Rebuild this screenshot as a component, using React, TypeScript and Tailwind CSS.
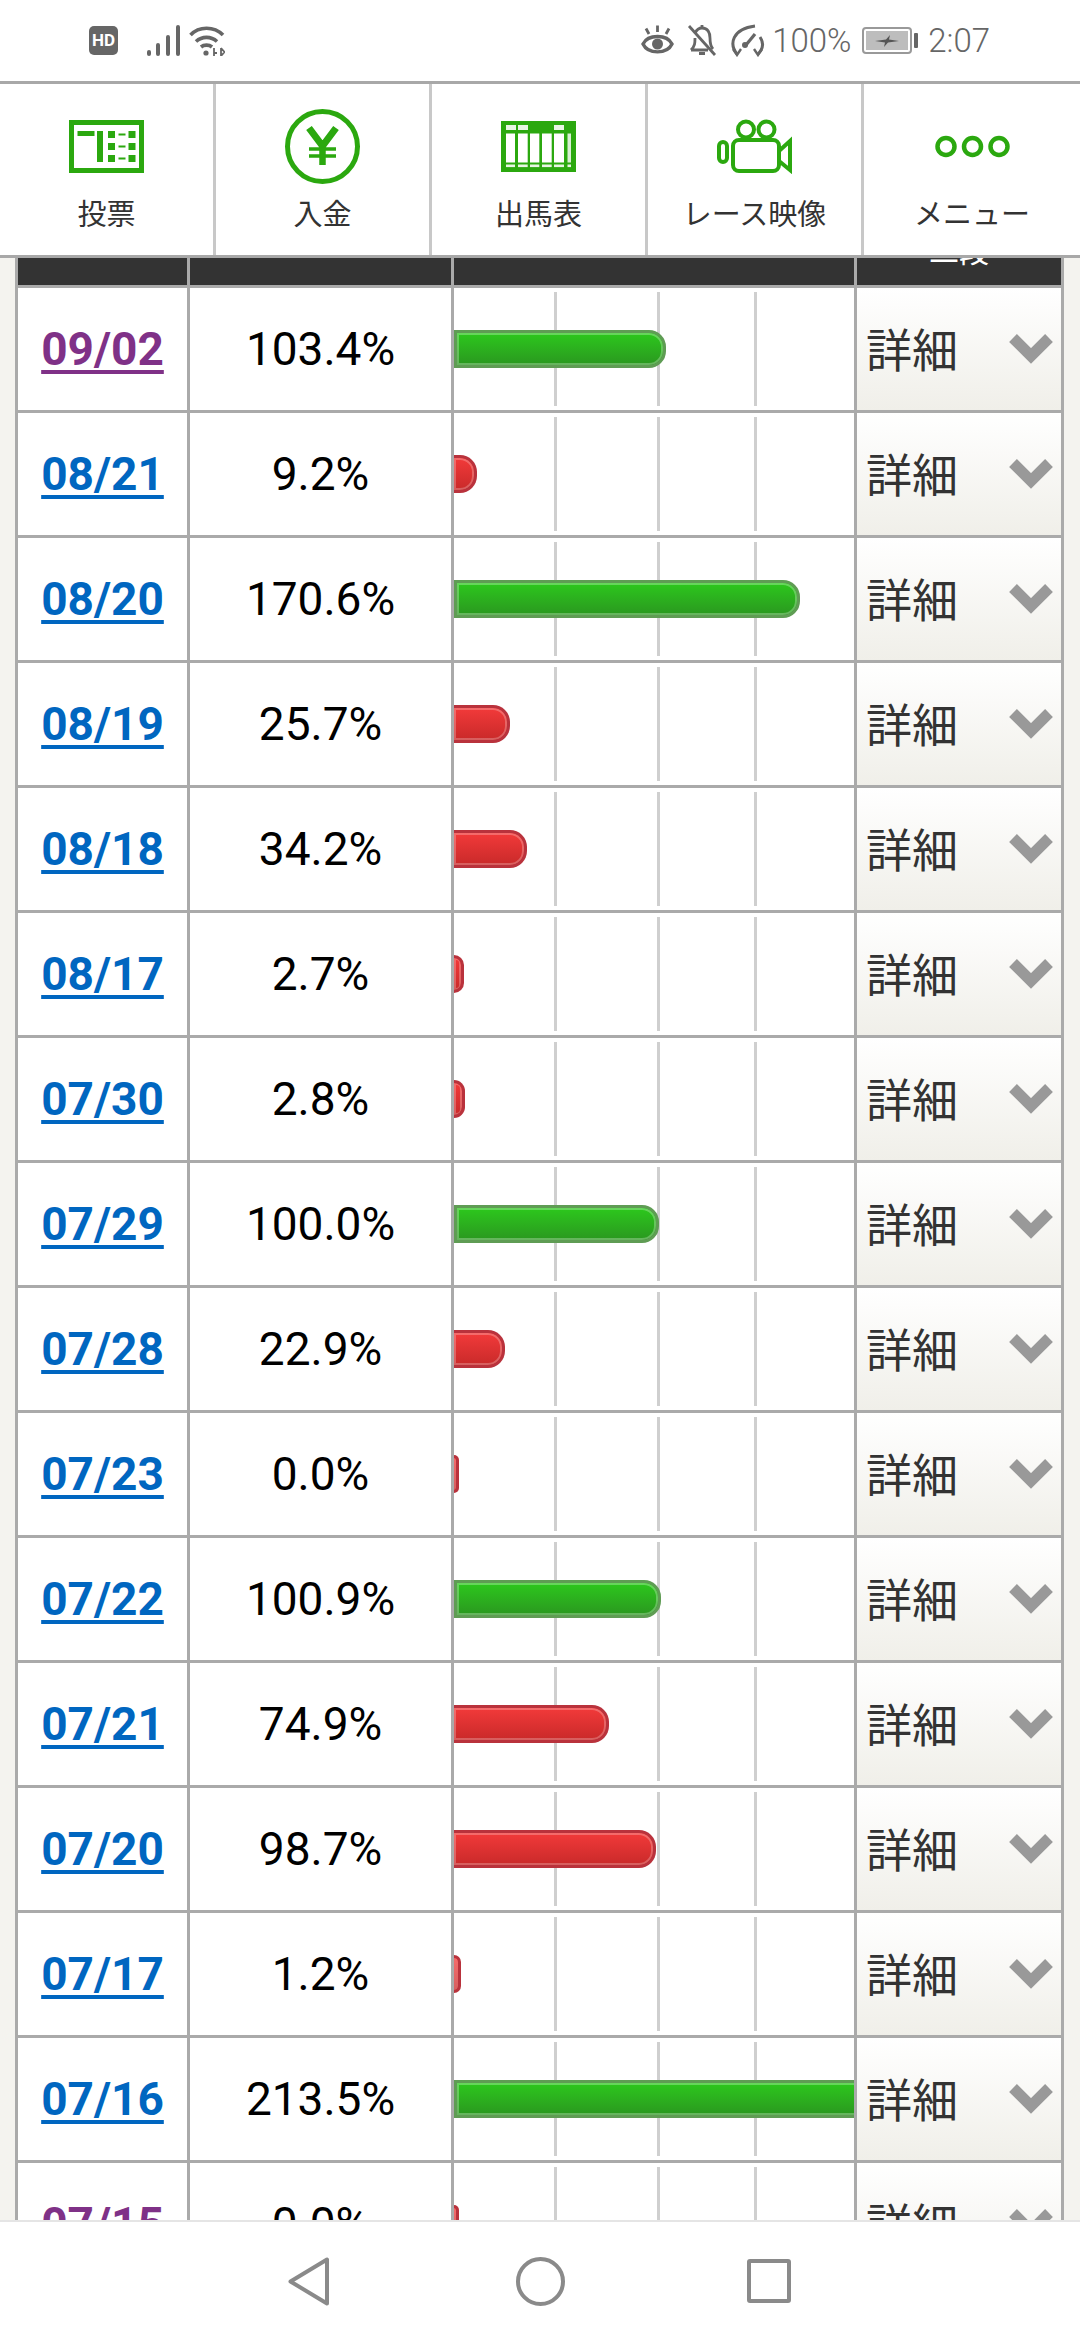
const rows = [
  { date: "09/02", pct: 103.4, visited: true },
  { date: "08/21", pct: 9.2 },
  { date: "08/20", pct: 170.6 },
  { date: "08/19", pct: 25.7 },
  { date: "08/18", pct: 34.2 },
  { date: "08/17", pct: 2.7 },
  { date: "07/30", pct: 2.8 },
  { date: "07/29", pct: 100.0 },
  { date: "07/28", pct: 22.9 },
  { date: "07/23", pct: 0.0 },
  { date: "07/22", pct: 100.9 },
  { date: "07/21", pct: 74.9, red: true },
  { date: "07/20", pct: 98.7, red: true },
  { date: "07/17", pct: 1.2 },
  { date: "07/16", pct: 213.5 },
  { date: "07/15", pct: 0.0, visited: true },
];

function StatusBar() {
  return (
    <div className="h-[81px] flex items-center justify-between pl-[89px] pr-[90px] bg-white text-[#666] font-['Roboto',sans-serif]">
      <div className="flex items-center">
        <div className="w-[29px] h-[29px] rounded-[5px] bg-[#666] flex items-center justify-center text-white text-[17px] font-bold leading-none">HD</div>
        <svg width="33" height="31" viewBox="0 0 33 31" className="ml-[29px]" fill="#666">
          <rect x="0" y="25" width="4" height="6" rx="2" />
          <rect x="9" y="18" width="4" height="13" rx="2" />
          <rect x="19" y="10" width="4" height="21" rx="2" />
          <rect x="29" y="0" width="4" height="31" rx="2" />
        </svg>
        <svg width="36" height="30" viewBox="0 0 36 30" className="ml-[9px]" fill="none" stroke="#666" strokeWidth="3.6">
          <path d="M1.5 9 C10 0 25 0 34 9" />
          <path d="M7 15.5 C13 10 22 10 28 15.5" />
          <path d="M12 21 C15 18.5 20 18.5 23 21" />
          <circle cx="17" cy="27" r="2.6" fill="#666" stroke="none" />
          <path d="M25 30 V22 M24.5 27 H28 M32 22 V30 M32 22 L35.5 26 L32 30" strokeWidth="1.8" />
        </svg>
      </div>
      <div className="flex items-center">
        <svg width="33" height="31" viewBox="0 0 33 31" fill="none" stroke="#666" strokeWidth="3.4">
          <path d="M2 19 C7 9 26 9 31 19 C26 29.5 7 29.5 2 19 Z" />
          <circle cx="16.5" cy="19" r="5.5" fill="#666" stroke="none" />
          <path d="M16.5 7 V0.5 M8 9 L5 3.5 M25 9 L28 3.5" strokeWidth="2.8" />
        </svg>
        <svg width="30" height="33" viewBox="0 0 30 33" className="ml-[13px]" fill="none" stroke="#666" strokeWidth="2.8">
          <path d="M4 26 H21 M4 26 C8 22 8 19 8 14 M8 9 C10 5 13 4 15 4 C21 4 23 9 23 14 C23 19 24 23 26 25" />
          <path d="M15 1 V4 M12 29.5 H18" />
          <path d="M2 2 L28 31" />
        </svg>
        <svg width="37" height="33" viewBox="0 0 37 33" className="ml-[12px]" fill="none" stroke="#666" strokeWidth="3">
          <path d="M8 30 C0 20 3 5 26 2" />
          <path d="M31 13 C35 19 34 25 29 30" />
          <path d="M4 25 L8 31 L12 25 M25 25 L29 31 L33 25" strokeWidth="2.4" />
          <path d="M17 21 L26 10" strokeWidth="3.2" />
          <circle cx="16" cy="21" r="3" fill="#666" stroke="none" />
        </svg>
        <span className="ml-[6px] text-[33px] font-light leading-none w-[80px]">100%</span>
        <div className="ml-[10px] w-[50px] h-[27px] border-[2px] border-[#999] rounded-[4px] p-[2px]">
          <div className="w-full h-full bg-[#bdbdbd] flex items-center justify-center">
            <svg width="24" height="12" viewBox="0 0 24 12" fill="#555">
              <path d="M0 6 L11 4.5 L15 0 L14 4.5 L24 6 L13 7.5 L9 12 L10 7.5 Z" />
            </svg>
          </div>
        </div>
        <div className="ml-[2px] w-[4px] h-[15px] bg-[#666] rounded-[1px]" />
        <span className="ml-[10px] text-[33px] font-light leading-none">2:07</span>
      </div>
    </div>
  );
}

const GREEN = "#2ba80f";

function VoteIcon() {
  return (
    <svg width="75" height="53" viewBox="0 0 75 53" fill={GREEN}>
      <rect x="2.5" y="2.5" width="70" height="48" fill="none" stroke={GREEN} strokeWidth="5" />
      <rect x="8.5" y="11" width="17" height="5" />
      <rect x="28" y="11" width="6" height="31" />
      {[11, 23, 35].map((y) => (
        <g key={y}>
          <rect x="39" y={y} width="7" height="7" />
          <rect x="49.5" y={y + 2.5} width="7" height="2" />
          <rect x="59.5" y={y} width="7" height="7" />
        </g>
      ))}
    </svg>
  );
}

function YenIcon() {
  return (
    <svg width="75" height="75" viewBox="0 0 75 75" fill="none" stroke={GREEN}>
      <circle cx="37.5" cy="37.5" r="35" strokeWidth="5" />
      <path d="M24 19 L37.5 37 L51 19" strokeWidth="7" />
      <path d="M37.5 36 V56" strokeWidth="6.5" />
      <path d="M24 40 H51 M24 47 H51" strokeWidth="3.6" />
    </svg>
  );
}

function TableIcon() {
  const cols: [number, number][] = [[5, 9], [17, 9.7], [29, 9.3], [41, 9.7], [53, 10]];
  return (
    <svg width="75" height="51" viewBox="0 0 75 51">
      <rect width="75" height="51" fill={GREEN} />
      {[5, 17, 53].map((x) => (
        <rect key={x} x={x} y="4" width="10" height="5" fill="#e8f5e4" />
      ))}
      {cols.map(([x, w]) => (
        <rect key={x} x={x} y="12.5" width={w} height="29" fill="#fff" />
      ))}
      <rect x="66.5" y="12.5" width="3.5" height="29" fill="#d8efd2" />
      {cols.map(([x, w]) => (
        <rect key={x} x={x} y="43.5" width={w} height="2.6" fill="#e8f5e4" />
      ))}
      <rect x="66.5" y="43.5" width="3.5" height="2.6" fill="#e8f5e4" />
    </svg>
  );
}

function CameraIcon() {
  return (
    <svg width="75" height="55" viewBox="0 0 75 55" fill="none" stroke={GREEN} strokeWidth="4">
      <circle cx="29" cy="10.5" r="8" />
      <circle cx="49.5" cy="10.5" r="8" />
      <rect x="16" y="21" width="46" height="31" rx="6" />
      <rect x="2" y="23" width="8" height="20" rx="4" />
      <path d="M62 32 L73 22 V51 L62 42" strokeWidth="4" />
    </svg>
  );
}

function MenuIcon() {
  return (
    <svg width="75" height="23" viewBox="0 0 75 23" fill="none" stroke={GREEN} strokeWidth="4.5">
      <circle cx="11" cy="11.5" r="8.5" />
      <circle cx="37.5" cy="11.5" r="8.5" />
      <circle cx="64" cy="11.5" r="8.5" />
    </svg>
  );
}

function NavItem({ label, icon, last }: { label: string; icon: React.ReactNode; last?: boolean }) {
  return (
    <div className={`flex flex-col items-center pt-[25px] ${last ? "" : "border-r-[3px] border-[#c8c8c8]"}`}>
      <div className="h-[75px] flex items-center justify-center">{icon}</div>
      <span className="mt-[9px] text-[29px] leading-[38px] text-[#333]">{label}</span>
    </div>
  );
}

function TopNav() {
  return (
    <div className="h-[177px] shrink-0 grid grid-cols-[216px_216px_216px_216px_216px] bg-white border-y-[3px] border-[#a8a8a8] font-['Noto_Sans_CJK_JP',sans-serif]">
      <NavItem label="投票" icon={<VoteIcon />} />
      <NavItem label="入金" icon={<YenIcon />} />
      <NavItem label="出馬表" icon={<TableIcon />} />
      <NavItem label="レース映像" icon={<CameraIcon />} />
      <NavItem label="メニュー" icon={<MenuIcon />} last />
    </div>
  );
}

function Bar({ pct, red }: { pct: number; red: boolean }) {
  const width = pct * 2 + 5;
  return (
    <div
      className={
        red
          ? "relative h-[38px] shrink-0 border-[3px] border-l-0 border-[#b9323c] rounded-r-[17px] bg-gradient-to-b from-[#f23a3a] to-[#c92a2a] shadow-[inset_0_0_0_2px_rgba(255,255,255,0.25)]"
          : "relative h-[38px] shrink-0 border-[3px] border-[#5f9c54] rounded-r-[17px] bg-gradient-to-b from-[#2cc81c] to-[#2a981f] shadow-[inset_0_0_0_2px_rgba(255,255,255,0.28)]"
      }
      style={{ width }}
    />
  );
}

function Row({ date, pct, visited, red }: { date: string; pct: number; visited?: boolean; red?: boolean }) {
  const isRed = red || pct < 100;
  return (
    <div className="h-[125px] shrink-0 grid grid-cols-[172px_264px_403px_207px] border-b-[3px] border-[#aaa]">
      <div className="flex items-center justify-center border-r-[3px] border-[#aaa] bg-white">
        <a className={`text-[46px] font-bold leading-none underline decoration-[4px] underline-offset-[5px] ${visited ? "text-[#7f3187]" : "text-[#0066c0]"}`}>{date}</a>
      </div>
      <div className="flex items-center justify-center border-r-[3px] border-[#aaa] bg-white text-[46px] leading-none text-black">
        {pct.toFixed(1)}%
      </div>
      <div className="relative flex items-center overflow-hidden border-r-[3px] border-[#aaa] bg-white">
        <div className="absolute top-[4px] bottom-[4px] left-[100px] w-[3px] bg-[#cfcfcf]" />
        <div className="absolute top-[4px] bottom-[4px] left-[203px] w-[3px] bg-[#cfcfcf]" />
        <div className="absolute top-[4px] bottom-[4px] left-[300px] w-[3px] bg-[#cfcfcf]" />
        <Bar pct={pct} red={isRed} />
      </div>
      <div className="flex items-center justify-between pl-[9px] pr-[8px] border-r-[3px] border-[#aaa] bg-gradient-to-b from-white to-[#f0efe9]">
        <span className="text-[46px] leading-none text-[#333] font-['Noto_Sans_CJK_JP',sans-serif] -mt-[5px]">詳細</span>
        <svg width="44" height="30" viewBox="0 0 44 30" fill="none" stroke="#999" strokeWidth="11">
          <path d="M4 4 L22 22 L40 4" />
        </svg>
      </div>
    </div>
  );
}

function BottomNav() {
  return (
    <div className="h-[120px] shrink-0 flex items-center pl-[288px] bg-white border-t-[2px] border-[#e5e5e5]">
      <svg width="41" height="49" viewBox="0 0 41 49" fill="none" stroke="#8a8a8a" strokeWidth="4" strokeLinejoin="round">
        <path d="M39 2.5 V46.5 L2.5 24.5 Z" />
      </svg>
      <div className="ml-[187px] w-[49px] h-[49px] rounded-full border-[4px] border-[#8a8a8a]" />
      <div className="ml-[182px] w-[44px] h-[44px] rounded-[3px] border-[4px] border-[#8a8a8a]" />
    </div>
  );
}

export default function App() {
  return (
    <div className="w-[1080px] h-[2340px] flex flex-col overflow-hidden bg-white font-['Roboto','Noto_Sans_CJK_JP',sans-serif]">
      <StatusBar />
      <TopNav />
      <main className="flex-1 min-h-0 overflow-hidden bg-[#f4f3ef] pl-[15px]">
        <div className="w-[1049px] border-l-[3px] border-[#aaa] flex flex-col">
          <div className="h-[30px] shrink-0 grid grid-cols-[172px_264px_403px_207px] border-b-[3px] border-[#aaa] bg-[#333]">
            <div className="border-r-[3px] border-[#aaa]" />
            <div className="border-r-[3px] border-[#aaa]" />
            <div className="border-r-[3px] border-[#aaa]" />
            <div className="border-r-[3px] border-[#aaa] overflow-hidden flex justify-center">
              <span className="-mt-[24px] h-[30px] text-[30px] leading-[30px] text-white font-['Noto_Sans_CJK_JP',sans-serif]">二段</span>
            </div>
          </div>
          {rows.map((row) => (
            <Row key={row.date} {...row} />
          ))}
        </div>
      </main>
      <BottomNav />
    </div>
  );
}
